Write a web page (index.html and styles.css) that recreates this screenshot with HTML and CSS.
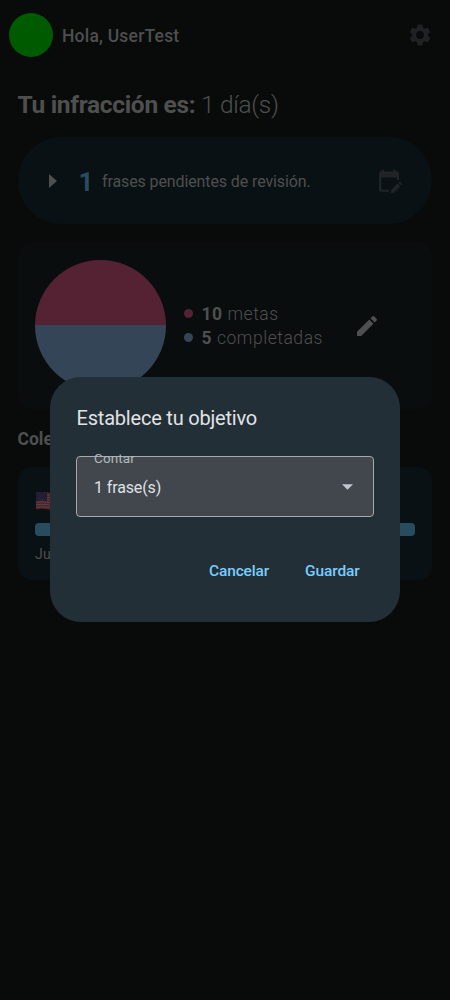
FILE: index.html
```html
<!DOCTYPE html>
<html lang="es">
<head>
<meta charset="utf-8">
<title>Inicio</title>
<link rel="stylesheet" href="styles.css">
</head>
<body>
<main class="screen">
  <header class="header">
    <div class="avatar"></div>
    <div class="greeting">Hola, UserTest</div>
    <svg class="gear" viewBox="0 0 24 24"><path d="M19.14 12.94c.04-.3.06-.61.06-.94s-.02-.64-.07-.94l2.03-1.58a.49.49 0 0 0 .12-.61l-1.92-3.32a.488.488 0 0 0-.59-.22l-2.39.96c-.5-.38-1.03-.7-1.62-.94l-.36-2.54a.484.484 0 0 0-.48-.41h-3.84c-.24 0-.43.17-.47.41l-.36 2.54c-.59.24-1.13.57-1.62.94l-2.39-.96a.48.48 0 0 0-.59.22L2.74 8.87c-.12.21-.08.47.12.61l2.03 1.58c-.05.3-.09.63-.09.94s.02.64.07.94l-2.03 1.58a.49.49 0 0 0-.12.61l1.92 3.32c.12.22.37.29.59.22l2.39-.96c.5.38 1.03.7 1.62.94l.36 2.54c.05.24.24.41.48.41h3.84c.24 0 .44-.17.47-.41l.36-2.54c.59-.24 1.13-.56 1.62-.94l2.39.96c.22.08.47 0 .59-.22l1.92-3.32a.48.48 0 0 0-.12-.61zM12 15.6A3.6 3.6 0 1 1 12 8.400a3.6 3.6 0 0 1 0 7.200z"/></svg>
  </header>
  <h1 class="streak"><b>Tu infracción es:</b> 1 día(s)</h1>
  <section class="pending">
    <svg class="play" viewBox="0 0 8 14"><path d="M0 0l8 7-8 7z"/></svg>
    <span class="count">1</span>
    <span class="pending-text">frases pendientes de revisión.</span>
    <svg class="calendar" viewBox="0 0 24 24"><path d="M3.500 2.500V.800h2.500v1.700h9V.800h2.500v1.700h1.500a2 2 0 0 1 2 2v6.500h-2V8.500H3.200V20a.8.8 0 0 0 .8.800h7v2H3.200a2.300 2.300 0 0 1-2.300-2.300v-16a2 2 0 0 1 2-2z"/><path d="M13 24v-3l6.500-6.500 2.800 2.800L15.700 24zM20.300 13.700l.8-.8q.5-.5 1 0l1.600 1.600q.5.500 0 1l-.8.800z"/></svg>
  </section>
  <section class="goals">
    <div class="pie"></div>
    <div class="legend">
      <div class="legend-row"><i class="dot dot-goal"></i><span><b>10</b> metas</span></div>
      <div class="legend-row"><i class="dot dot-done"></i><span><b>5</b> completadas</span></div>
    </div>
    <svg class="pencil" viewBox="3 3 18 18"><path d="M3 17.250V21h3.750L17.810 9.940l-3.750-3.750zM20.710 7.040a1 1 0 0 0 0-1.410l-2.340-2.340a1 1 0 0 0-1.410 0l-1.830 1.830 3.750 3.750z"/></svg>
  </section>
  <h2 class="collections-title">Colecciones</h2>
  <section class="collection">
    <svg class="flag" viewBox="0 0 24 18">
      <path class="flag-white" d="M1 1q6-1 11 0t11 0v16q-6 1-11 0t-11 0z"/>
      <path class="flag-stripes" d="M1 2q6-1 11 0t11 0M1 4.500q6-1 11 0t11 0M1 7q6-1 11 0t11 0M1 9.500q6-1 11 0t11 0M1 12q6-1 11 0t11 0M1 14.500q6-1 11 0t11 0M1 17q6-1 11 0t11 0"/>
      <path class="flag-blue" d="M1 1q6-1 11 0v8.500q-5-1-11 0z"/>
      <path class="flag-stars" d="M2 2.500h9M3 4.500h8M2 6.500h9M3 8h8"/>
    </svg>
    <div class="progress"></div>
    <div class="collection-name">Ju</div>
  </section>
</main>
<div class="dialog" role="dialog">
  <h3 class="dialog-title">Establece tu objetivo</h3>
  <div class="select">
    <span class="select-label">Contar</span>
    <span class="select-value">1 frase(s)</span>
    <svg class="caret" viewBox="0 0 12 6"><path d="M0 0h12L6 6z"/></svg>
  </div>
  <div class="actions"><span>Cancelar</span><span>Guardar</span></div>
</div>
</body>
</html>
```
FILE: styles.css
```css
* { box-sizing: border-box; }
body {
  margin: 0;
  background: #090b0a;
  color: #4e4f4f;
  font-family: Roboto, sans-serif;
  height: 1000px;
  overflow: hidden;
}
h1, h2, h3 { margin: 0; font-weight: 400; }
svg { display: block; flex: none; }
.screen { padding: 0 18px 0 17.500px; }
.header {
  display: flex;
  align-items: center;
  height: 70px;
  margin: 0 -9px 0 -8.500px;
  padding: 0 8.500px 0 0;
}
.avatar { width: 44px; height: 44px; border-radius: 50%; background: #005a00; }
.greeting {
  margin-left: 9px;
  padding-top: 2px;
  font-size: 17.500px;
  font-weight: 500;
  letter-spacing: 0.200px;
  flex: 1;
}
.gear { width: 26px; height: 26px; fill: #202123; }
.streak { height: 67px; line-height: 69px; font-size: 24.500px; font-weight: 300; letter-spacing: -0.310px; white-space: nowrap; }
.streak b { font-weight: 700; }
.pending {
  display: flex;
  align-items: center;
  height: 87px;
  border-radius: 44px;
  background: #0a1114;
  padding: 0 30.500px 0 31.500px;
}
.play { width: 8px; height: 14px; fill: #4e4f4f; }
.count { margin-left: 21.500px; padding-top: 2px; width: 23.500px; font-size: 26px; font-weight: 700; color: #284c60; }
.pending-text { padding-top: 2px; font-size: 16px; letter-spacing: -0.110px; flex: 1; white-space: nowrap; }
.calendar { width: 24px; height: 24px; fill: #202427; overflow: visible; }
.goals {
  display: flex;
  align-items: center;
  height: 167px;
  margin-top: 18px;
  border-radius: 14px;
  background: #090d0e;
  padding: 0 17.500px;
}
.pie {
  width: 131px;
  height: 131px;
  border-radius: 50%;
  background: linear-gradient(#542232 50%, #334557 50%);
}
.legend { margin-left: 17.500px; width: 173.500px; padding-top: 0; }
.legend-row {
  display: flex;
  align-items: center;
  height: 24px;
  gap: 9px;
  font-size: 17.500px;
  font-weight: 300;
  letter-spacing: 0.550px;
  white-space: nowrap;
}
.legend-row b { font-weight: 700; }
.dot { width: 9px; height: 9px; border-radius: 50%; }
.dot-goal { background: #542232; }
.dot-done { background: #334557; }
.pencil { width: 20px; height: 20px; fill: #4e4f4f; }
.collections-title { height: 58px; line-height: 61px; font-size: 17.500px; font-weight: 700; }
.collection {
  height: 113px;
  border-radius: 14px;
  background: #0a1114;
  padding: 24px 17.500px 0;
}
.flag { width: 24px; height: 19px; }
.flag-white { fill: #4d4a4d; }
.flag-stripes { stroke: #562027; stroke-width: 1.300; fill: none; }
.flag-blue { fill: #1c1b30; }
.flag-stars { stroke: #44434f; stroke-width: 0.700; stroke-dasharray: 0.700 1.300; }
.progress { height: 13px; margin-top: 13px; border-radius: 4px; background: #284c5e; }
.collection-name { margin-top: 9px; font-size: 14px; line-height: 18px; letter-spacing: 0.300px; }
.dialog {
  position: absolute;
  left: 50px;
  top: 377px;
  width: 350px;
  height: 245px;
  border-radius: 31px;
  background: #232f36;
  padding: 26px;
}
.dialog-title { padding-left: 0.500px; font-size: 20px; line-height: 30px; letter-spacing: -0.200px; color: #e1e2e5; }
.select {
  position: relative;
  display: flex;
  align-items: center;
  justify-content: space-between;
  height: 61px;
  margin-top: 23px;
  border: 1.500px solid #a4aaaf;
  border-radius: 4px;
  background: #41474d;
  padding: 1px 20px 0 17px;
}
.select-label {
  position: absolute;
  left: 17px;
  top: -7.500px;
  font-size: 13.500px;
  line-height: 16px;
  letter-spacing: 0.100px;
  color: #b2b8bd;
}
.select-value { padding-top: 1px; font-size: 16px; letter-spacing: -0.120px; color: #dfe1e4; }
.caret { width: 11px; height: 6px; fill: #c1c7ce; }
.actions {
  display: flex;
  justify-content: flex-end;
  gap: 36px;
  margin-top: 44px;
  padding-right: 14.500px;
  font-size: 15.500px;
  line-height: 20px;
  font-weight: 500;
  letter-spacing: -0.150px;
  color: #78cdff;
}
```
